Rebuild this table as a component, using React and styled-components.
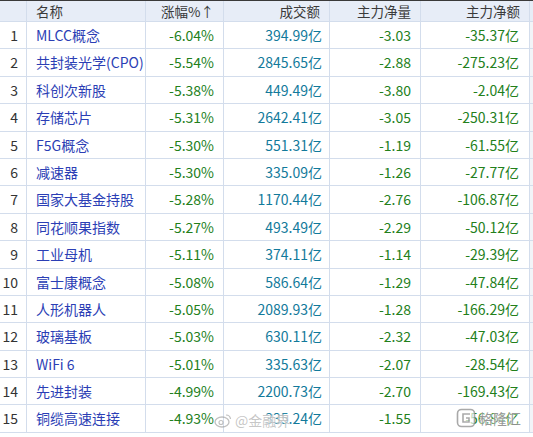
import React from "react";
import { styled, createGlobalStyle } from "styled-components";

const GlobalStyle = createGlobalStyle`
  html, body {
    margin: 0;
    padding: 0;
    background: #ffffff;
  }
  body {
    font-family: "Noto Sans CJK SC", "Noto Sans", sans-serif;
  }
`;

const Page = styled.div`
  position: relative;
  width: 533px;
  height: 437px;
  overflow: hidden;
  background: #ffffff;
  border-top: 1px solid #3a3a3a;
  box-sizing: border-box;
`;

const Table = styled.div`
  display: grid;
  grid-template-columns: 27px 119px 78px 106px 91px 109px 3px;
`;

const HeadCell = styled.div`
  height: 21px;
  box-sizing: border-box;
  background: #e7edf7;
  border-right: ${(p) => (p.$last ? "none" : "1px solid #d3ddec")};
  border-bottom: 1px solid #d3ddec;
  color: #3a3a3a;
  font-size: 13.5px;
  line-height: 20px;
  text-align: ${(p) => p.$align || "right"};
  padding: 0 ${(p) => p.$pr ?? 9}px 0 ${(p) => p.$pl ?? 0}px;
  white-space: nowrap;
`;

const Cell = styled.div`
  height: 27.4px;
  box-sizing: border-box;
  border-right: ${(p) => (p.$last ? "none" : "1px solid #d3ddec")};
  border-bottom: 1px solid #d3ddec;
  background: ${(p) => (p.$last ? "#f2f4f8" : "#ffffff")};
  color: ${(p) => p.$color || "#333333"};
  font-size: 14px;
  line-height: 26px;
  text-align: ${(p) => p.$align || "right"};
  padding: 0 ${(p) => p.$pr ?? 9}px 0 ${(p) => p.$pl ?? 0}px;
  white-space: nowrap;
  overflow: hidden;
`;

const Watermark = styled.div`
  position: absolute;
  display: flex;
  align-items: center;
  gap: 3px;
  color: ${(p) => p.$color || "rgba(150, 150, 150, 0.55)"};
  font-size: 14px;
  left: ${(p) => p.$left}px;
  top: ${(p) => p.$top}px;
  pointer-events: none;
  white-space: nowrap;
  text-shadow: 0 0 2px #ffffff, 0 0 2px #ffffff;
`;

const GREEN = "#23801b";
const BLUE = "#2b3eb5";
const TEAL = "#127a9b";

const rows = [
  ["MLCC概念", "-6.04%", "394.99亿", "-3.03", "-35.37亿"],
  ["共封装光学(CPO)", "-5.54%", "2845.65亿", "-2.88", "-275.23亿"],
  ["科创次新股", "-5.38%", "449.49亿", "-3.80", "-2.04亿"],
  ["存储芯片", "-5.31%", "2642.41亿", "-3.05", "-250.31亿"],
  ["F5G概念", "-5.30%", "551.31亿", "-1.19", "-61.55亿"],
  ["减速器", "-5.30%", "335.09亿", "-1.26", "-27.77亿"],
  ["国家大基金持股", "-5.28%", "1170.44亿", "-2.76", "-106.87亿"],
  ["同花顺果指数", "-5.27%", "493.49亿", "-2.29", "-50.12亿"],
  ["工业母机", "-5.11%", "374.11亿", "-1.14", "-29.39亿"],
  ["富士康概念", "-5.08%", "586.64亿", "-1.29", "-47.84亿"],
  ["人形机器人", "-5.05%", "2089.93亿", "-1.28", "-166.29亿"],
  ["玻璃基板", "-5.03%", "630.11亿", "-2.32", "-47.03亿"],
  ["WiFi 6", "-5.01%", "335.63亿", "-2.07", "-28.54亿"],
  ["先进封装", "-4.99%", "2200.73亿", "-2.70", "-169.43亿"],
  ["铜缆高速连接", "-4.93%", "335.24亿", "-1.55", "-56.84亿"],
];

function WeiboIcon() {
  return (
    <svg width="18" height="15" viewBox="0 0 18 15">
      <ellipse cx="8" cy="9" rx="7" ry="5" fill="none" stroke="rgba(150,150,150,0.6)" strokeWidth="1.3" />
      <circle cx="7" cy="9.5" r="2" fill="none" stroke="rgba(150,150,150,0.6)" strokeWidth="1.1" />
      <path d="M12 2 Q16 2 16.5 6" fill="none" stroke="rgba(150,150,150,0.6)" strokeWidth="1.2" />
    </svg>
  );
}

function GelonghuiIcon() {
  return (
    <svg width="20" height="20" viewBox="0 0 20 20">
      <rect x="1.5" y="1.5" width="17" height="17" rx="4" fill="#ffffff" fillOpacity="0.7" stroke="rgba(140,140,140,0.75)" strokeWidth="1.6" />
      <path d="M14 6 H7 V14 H13 V10 H10" fill="none" stroke="rgba(140,140,140,0.75)" strokeWidth="1.6" />
    </svg>
  );
}

export default function App() {
  return (
    <>
      <GlobalStyle />
      <Page>
        <Table>
          <HeadCell $pr={0} />
          <HeadCell $align="left" $pl={9} $pr={0}>
            名称
          </HeadCell>
          <HeadCell>涨幅%↑</HeadCell>
          <HeadCell>成交额</HeadCell>
          <HeadCell>主力净量</HeadCell>
          <HeadCell>主力净额</HeadCell>
          <HeadCell $last $pr={0} />
          {rows.map((r, i) => (
            <React.Fragment key={i}>
              <Cell $pr={8}>{i + 1}</Cell>
              <Cell $align="left" $pl={9} $pr={0} $color={BLUE}>
                {r[0]}
              </Cell>
              <Cell $color={GREEN}>{r[1]}</Cell>
              <Cell $color={TEAL} $pr={7}>
                {r[2]}
              </Cell>
              <Cell $color={GREEN}>{r[3]}</Cell>
              <Cell $color={GREEN} $pr={10}>
                {r[4]}
              </Cell>
              <Cell $last $pr={0} />
            </React.Fragment>
          ))}
        </Table>
        <Watermark $left={214} $top={409}>
          <WeiboIcon />
          <span>@金融界</span>
        </Watermark>
        <Watermark $left={456} $top={407} $color="rgba(120, 120, 120, 0.75)">
          <GelonghuiIcon />
          <span>格隆汇</span>
        </Watermark>
      </Page>
    </>
  );
}
